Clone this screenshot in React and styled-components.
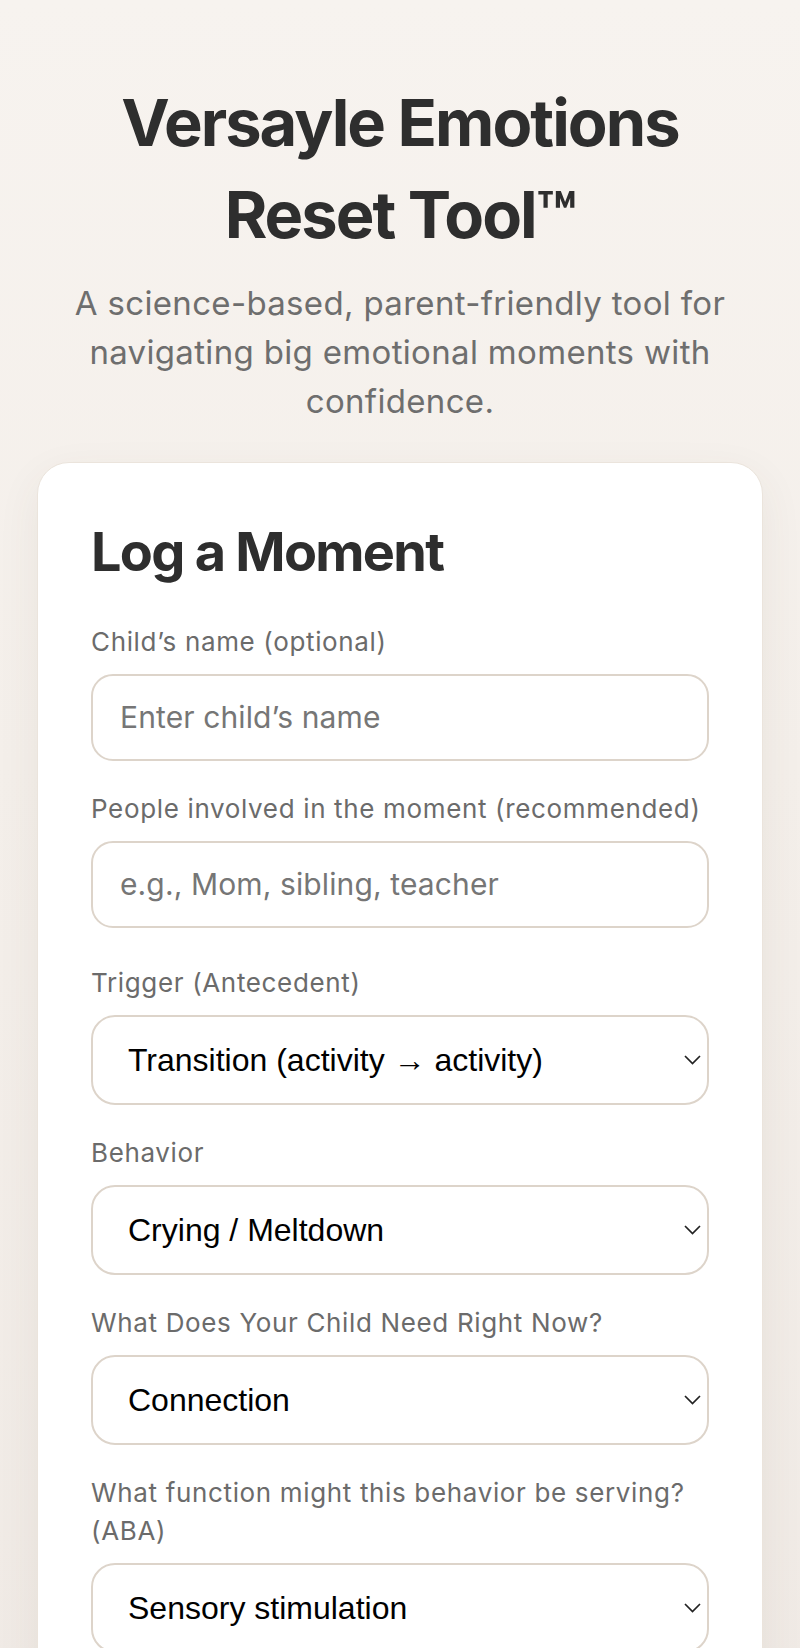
import styled, { createGlobalStyle } from "styled-components";

const GlobalStyle = createGlobalStyle`
  * { box-sizing: border-box; }
  html, body { margin: 0; }
  body {
    min-height: 100vh;
    background: linear-gradient(180deg, #f7f3ef 0%, #f4efea 40%, #efe9e4 100%);
    font-family: Inter, "Noto Sans", sans-serif;
    color: #2e2e2e;
  }
`;

const Page = styled.main`
  padding: 77px 37px 80px;
`;

const Header = styled.header`
  text-align: center;
`;

const Title = styled.h1`
  margin: 0;
  font-size: 65px;
  line-height: 91.7px;
  font-weight: 700;
  letter-spacing: -0.03em;
  color: #2e2e2e;
`;

const Subtitle = styled.p`
  margin: 19px 0 0;
  font-size: 33px;
  line-height: 48.7px;
  letter-spacing: 0.01em;
  color: #6e6e6e;
`;

const Card = styled.section`
  margin-top: 36px;
  background: #fff;
  border: 1px solid #ebe4dc;
  border-radius: 32px;
  padding: 56px 53px 60px;
  box-shadow: 0 14px 44px rgba(90, 70, 50, 0.07);
`;

const CardTitle = styled.h2`
  margin: 0 0 38px;
  font-size: 54px;
  line-height: 66px;
  font-weight: 700;
  letter-spacing: -0.032em;
  color: #2e2e2e;
`;

const Field = styled.div`
  display: flex;
  flex-direction: column;
  margin-bottom: ${(p) => p.$gap || 29}px;
`;

const Label = styled.label`
  font-size: 26px;
  line-height: 38px;
  letter-spacing: 0.025em;
  color: #6b6b6b;
  margin-bottom: 13px;
`;

const TextInput = styled.input`
  height: 87px;
  width: 100%;
  border: 2px solid #ddd4ca;
  border-radius: 22px;
  padding: 0 27px;
  background: #fff;
  font-family: Inter, "Noto Sans", sans-serif;
  font-size: 30px;
  letter-spacing: 0.004em;
  color: #2e2e2e;
  outline: none;

  &::placeholder {
    color: #767676;
  }
`;

const SelectWrap = styled.div`
  position: relative;
`;

const Select = styled.select`
  appearance: none;
  -webkit-appearance: none;
  width: 100%;
  height: 90px;
  border: 2px solid #ddd4ca;
  border-radius: 24px;
  padding: 0 60px 0 35px;
  background: #fff;
  font-family: "Liberation Sans", Arial, sans-serif;
  font-size: 32px;
  color: #000;
  outline: none;
`;

const Chevron = styled.svg`
  position: absolute;
  right: 8px;
  top: 50%;
  transform: translateY(-50%);
  pointer-events: none;
`;

const Button = styled.button`
  width: 100%;
  height: 88px;
  border: none;
  border-radius: 22px;
  background: #2e2e2e;
  color: #fff;
  font-family: Inter, sans-serif;
  font-size: 30px;
  font-weight: 600;
`;

const DropDown = ({ id, value, options }) => (
  <SelectWrap>
    <Select id={id} defaultValue={value}>
      {options.map((o) => (
        <option key={o}>{o}</option>
      ))}
    </Select>
    <Chevron width="17" height="10" viewBox="0 0 17 10" fill="none">
      <path d="M1 1l7.5 7.5L16 1" stroke="#222" strokeWidth="1.7" />
    </Chevron>
  </SelectWrap>
);

const fields = [
  {
    id: "trigger",
    label: "Trigger (Antecedent)",
    value: "Transition (activity → activity)",
    options: ["Transition (activity → activity)", "Told “no”", "Screen time ending", "Hunger / tiredness"],
  },
  {
    id: "behavior",
    label: "Behavior",
    value: "Crying / Meltdown",
    options: ["Crying / Meltdown", "Hitting / Kicking", "Yelling", "Running away"],
  },
  {
    id: "need",
    label: "What Does Your Child Need Right Now?",
    value: "Connection",
    options: ["Connection", "Rest", "Space", "Movement"],
  },
  {
    id: "function",
    label: "What function might this behavior be serving? (ABA)",
    value: "Sensory stimulation",
    options: ["Sensory stimulation", "Escape / avoidance", "Attention", "Access to tangibles"],
  },
];

export default function App() {
  return (
    <>
      <GlobalStyle />
      <Page>
        <Header>
          <Title>Versayle Emotions Reset Tool™</Title>
          <Subtitle>
            A science-based, parent-friendly tool for navigating big emotional moments with confidence.
          </Subtitle>
        </Header>

        <Card>
          <CardTitle>Log a Moment</CardTitle>

          <Field>
            <Label htmlFor="child">Child’s name (optional)</Label>
            <TextInput id="child" placeholder="Enter child’s name" />
          </Field>

          <Field $gap={36}>
            <Label htmlFor="people">People involved in the moment (recommended)</Label>
            <TextInput id="people" placeholder="e.g., Mom, sibling, teacher" />
          </Field>

          {fields.map((f) => (
            <Field key={f.id}>
              <Label htmlFor={f.id}>{f.label}</Label>
              <DropDown id={f.id} value={f.value} options={f.options} />
            </Field>
          ))}

          <Button type="button">Save Moment</Button>
        </Card>
      </Page>
    </>
  );
}
